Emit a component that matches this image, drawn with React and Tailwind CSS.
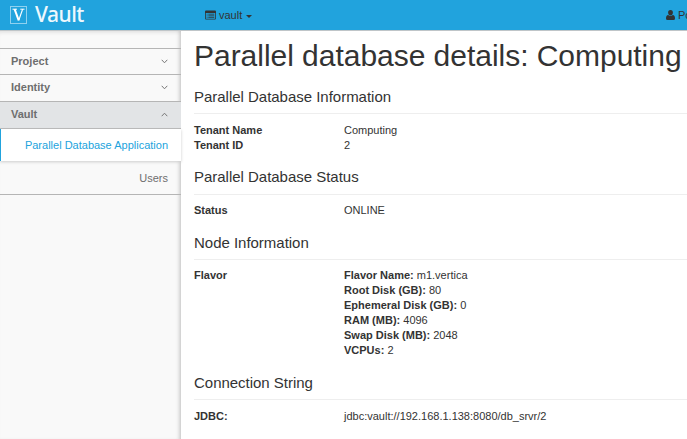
import React from 'react';

function Chevron({ up }) {
  return (
    <svg className="h-[5px] w-[7px]" viewBox="0 0 7 5" fill="none" stroke="#777" strokeWidth="1">
      <path d={up ? 'M0.7 4.2 L3.5 1.2 L6.3 4.2' : 'M0.7 0.8 L3.5 3.8 L6.3 0.8'} />
    </svg>
  );
}

function Group({ label, open, className }) {
  return (
    <div className={`flex items-center justify-between border-b border-[#b5b5b5] pr-[13px] pl-[11px] ${className}`}>
      <span className="font-bold text-[#6e6e6e]">{label}</span>
      <Chevron up={open} />
    </div>
  );
}

function Section({ title, headingClass = 'h-[26px]', listClass = 'mt-[9px]', className, children }) {
  return (
    <section className={className}>
      <h4 className={`border-b border-[#eee] text-[15px] leading-[18px] whitespace-nowrap ${headingClass}`}>
        <span className="tracking-[-0.02px]">{title}</span>
      </h4>
      <dl className={listClass}>{children}</dl>
    </section>
  );
}

function Row({ term, children }) {
  return (
    <div className="flex leading-[15px]">
      <dt className="w-[150px] shrink-0 font-bold">{term}</dt>
      <dd className="whitespace-nowrap">{children}</dd>
    </div>
  );
}

const flavor = [
  ['Flavor Name:', 'm1.vertica'],
  ['Root Disk (GB):', '80'],
  ['Ephemeral Disk (GB):', '0'],
  ['RAM (MB):', '4096'],
  ['Swap Disk (MB):', '2048'],
  ['VCPUs:', '2'],
];

export default function App() {
  return (
    <div className="flex h-[439px] w-[687px] flex-col overflow-hidden bg-white font-['Liberation_Sans',Arial,sans-serif] text-[11px] text-[#333]">
      <header className="flex h-[31px] shrink-0 border-b border-[#bfc5c8] bg-[#21a3dd]">
        <div className="flex w-[205px] shrink-0 pl-[10px]">
          <svg className="mt-[6px] h-[18px] w-[17px]" viewBox="0 0 17 18" fill="none">
            <rect x="0.5" y="0.5" width="16" height="17" stroke="#8fd1ef" />
            <path d="M2.5 3.2H7M10.3 3.2H14.5" stroke="#fff" strokeWidth="1" />
            <path d="M4.6 3.2L8.7 14.3" stroke="#fff" strokeWidth="2" />
            <path d="M12.6 3.2L8.7 14.5" stroke="#fff" strokeWidth="1.1" />
          </svg>
          <span className="ml-[8px] h-[30px] font-['Noto_Sans',sans-serif] text-[21px] leading-[29px] font-medium tracking-[-0.5px] text-[#eef8fd]">
            Vault
          </span>
        </div>
        <div className="flex h-[30px] items-center">
          <svg className="h-[10px] w-[11px]" viewBox="0 0 11 10">
            <path
              fill="#333"
              fillRule="evenodd"
              d="M1 .5h9a1 1 0 0 1 1 1v7a1 1 0 0 1-1 1H1a1 1 0 0 1-1-1v-7a1 1 0 0 1 1-1zM.8 3v5.4q0 .3.3.3h8.8q.3 0 .3-.3V3z"
            />
            <path stroke="#333" strokeWidth=".8" d="M1.7 4.2h.8M3.3 4.2h6M1.7 5.8h.8M3.3 5.8h6M1.7 7.4h.8M3.3 7.4h6" />
          </svg>
          <span className="ml-[3px]">vault</span>
          <svg className="mt-[2px] ml-[4px] h-[3px] w-[6px]" viewBox="0 0 6 3">
            <path fill="#333" d="M0 0h6L3 3z" />
          </svg>
        </div>
        <div className="ml-auto flex h-[30px] w-[21px] items-center overflow-hidden whitespace-nowrap">
          <svg className="h-[10px] w-[9px] shrink-0" viewBox="0 0 9 10">
            <path
              fill="#333"
              d="M4.5 0a2.6 2.6 0 0 1 2.4 2.8C6.9 4.4 5.8 5.6 4.5 5.6S2.1 4.4 2.1 2.8A2.6 2.6 0 0 1 4.5 0zM2.2 4.9q2.3 2 4.6 0Q9 5.2 9 8.4 9 10 7.5 10h-6Q0 10 0 8.4 0 5.2 2.2 4.9z"
            />
          </svg>
          <span className="ml-[3px]">Po</span>
        </div>
      </header>

      <div className="flex min-h-0 flex-1">
        <nav className="w-[181px] shrink-0 bg-[#f9f9f9] shadow-[inset_-4px_0_4px_-3px_#bbb,inset_0_4px_4px_-3px_#ddd]">
          <div className="h-[18px] border-b border-[#b5b5b5]" />
          <Group label="Project" className="h-[26px]" />
          <Group label="Identity" className="h-[27px] pb-[1px]" />
          <Group label="Vault" open className="h-[27px] bg-[#e2e4e6] pb-[1px]" />
          <div className="flex h-[32px] items-center justify-end border-l border-[#21a3dd] bg-white pr-[13px] text-[#21a3dd] shadow-[0_1px_3px_#ccc]">
            Parallel Database Application
          </div>
          <div className="flex h-[34px] items-center justify-end border-b border-[#b5b5b5] pt-[1px] pr-[13px] text-[#6e6e6e]">
            Users
          </div>
        </nav>

        <main className="min-w-0 flex-1 overflow-hidden pl-[13px]">
          <h1 className="h-[57px] pt-[6px] text-[30px] leading-[38px] tracking-[-0.03px] whitespace-nowrap">
            Parallel database details: Computing
          </h1>
          <Section title="Parallel Database Information">
            <Row term="Tenant Name">Computing</Row>
            <Row term="Tenant ID">2</Row>
          </Section>
          <Section
            title="Parallel Database Status"
            className="mt-[15px]"
            headingClass="h-[27px]"
            listClass="mt-[8px]"
          >
            <Row term="Status">ONLINE</Row>
          </Section>
          <Section title="Node Information" className="mt-[16px]" listClass="mt-[8px]">
            <Row term="Flavor">
              {flavor.map(([name, value]) => (
                <div key={name}>
                  <b>{name}</b> {value}
                </div>
              ))}
            </Row>
          </Section>
          <Section title="Connection String" className="mt-[16px]">
            <Row term="JDBC:">jdbc:vault://192.168.1.138:8080/db_srvr/2</Row>
          </Section>
        </main>
      </div>
    </div>
  );
}
